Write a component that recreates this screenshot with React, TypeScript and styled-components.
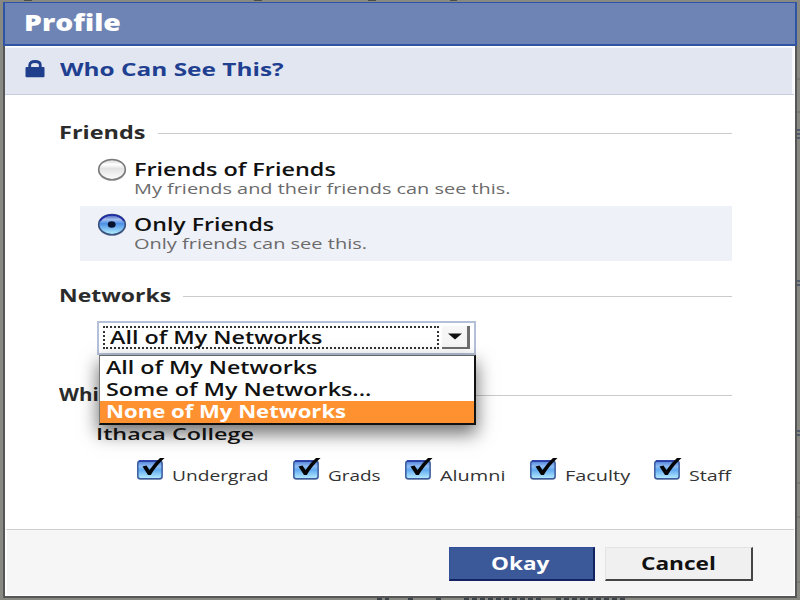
import React, { useLayoutEffect, useRef, useState } from "react";
import styled, { createGlobalStyle, css } from "styled-components";

const GlobalStyle = createGlobalStyle`
  * { box-sizing: border-box; }
  html, body { margin: 0; width: 800px; height: 600px; overflow: hidden; }
  body { font-family: "Open Sans", "Noto Sans", sans-serif; color: #111; }
`;

const Backdrop = styled.main`
  position: relative;
  width: 800px;
  height: 600px;
  padding: 2px 3px;
  background: #898984;
  overflow: hidden;
`;

const PageTrace = styled.svg`
  position: absolute;
  inset: 0;
`;

const Dialog = styled.section`
  position: relative;
  display: flex;
  flex-direction: column;
  width: 794px;
  height: 596px;
`;

const TitleBar = styled.header`
  flex: none;
  height: 44px;
  padding: 0 0 2px 19px;
  display: flex;
  align-items: center;
  background: #6d84b4;
  border: 2px solid #2f54a3;
  border-top-width: 1px;
`;

const Frame = styled.div`
  flex: 1;
  display: flex;
  flex-direction: column;
  border: 2px solid #565656;
  border-top: 0;
  padding: 1px 1px 1px 0;
  background: #fff;
`;

const SubHeader = styled.div`
  flex: none;
  height: 48px;
  padding: 0 0 2px 20px;
  display: flex;
  align-items: center;
  background: #e2e6f0;
  border-bottom: 1px solid #c6cadf;
  box-shadow: inset -2px 1px 0 #f6f7fc;
`;

const LockBox = styled.svg`
  display: block;
  width: 20px;
  height: 20px;
  margin-right: 15px;
`;

const Body = styled.div`
  flex: 1;
  min-height: 0;
  padding: 27px 62px 0 54px;
`;

const SectionHead = styled.div<{ $gap?: number }>`
  display: flex;
  align-items: center;
  height: 22px;
  margin-top: ${(p) => p.$gap ?? 0}px;
  &::after {
    content: "";
    flex: 1;
    height: 1px;
    margin: 0 0 0 12px;
    background: #cbcbcb;
  }
`;

const Options = styled.div`
  padding-top: 7px;
`;

const Option = styled.label<{ $selected?: boolean }>`
  display: flex;
  height: 55px;
  margin-left: 21px;
  padding: 7px 0 0 17px;
  background: ${(p) => (p.$selected ? "#eff1f8" : "transparent")};
`;

const OptionText = styled.div`
  padding: 1px 0 0 7px;
`;

const RadioIcon = styled.svg`
  display: block;
  width: 30px;
  height: 24px;
`;

const Network = styled.div`
  position: relative;
  z-index: 3;
  padding: 18px 0 0 37px;
`;

const SelectWrap = styled.div`
  position: relative;
  width: 379px;
  height: 34px;
  margin: 14px 0 0 38px;
`;

const SelectBox = styled.div`
  display: flex;
  height: 34px;
  padding: 3px 4px 4px 4px;
  border: 2px solid #b4c0d8;
  background: #fff;
`;

const SelectValue = styled.div`
  width: 336px;
  padding-left: 5px;
  display: flex;
  align-items: center;
  border: 2px dotted #333;
`;

const SelectArrow = styled.div`
  flex: 1;
  margin-left: 3px;
  display: flex;
  align-items: center;
  justify-content: center;
  background: #f6f6f6;
  border: solid #6e6e6e;
  border-width: 0 3px 2px 0;
`;

const Menu = styled.div`
  position: absolute;
  z-index: 2;
  top: 34px;
  left: 2px;
  width: 377px;
  height: 70px;
  padding-top: 1px;
  background: #fff;
  border: solid #111;
  border-width: 1px 2px 2px 1px;
  border-left-color: #777;
  border-top-color: #666;
  box-shadow: 0 8px 17px 1px rgba(0, 0, 0, 0.55);
`;

const MenuItem = styled.div<{ $active?: boolean }>`
  height: 22px;
  padding: 0 0 1px 6px;
  display: flex;
  align-items: center;
  ${(p) =>
    p.$active &&
    css`
      color: #fff;
      background: #ff9130;
    `}
`;

const Checks = styled.div`
  display: flex;
  padding: 13px 0 0 78px;
`;

const Check = styled.label<{ $width: number }>`
  display: flex;
  width: ${(p) => p.$width}px;
  flex: none;
`;

const CheckIcon = styled.svg`
  display: block;
  flex: none;
  width: 30px;
  height: 26px;
  margin-right: 5px;
`;

const CheckText = styled.div`
  padding-top: 9px;
`;

const Footer = styled.footer`
  flex: none;
  height: 66px;
  padding: 17px 41px 0 0;
  display: flex;
  justify-content: flex-end;
  gap: 10px;
  background: #f6f6f6;
  border-top: 1px solid #cfcfcf;
  border-left: 2px solid #fff;
`;

const Button = styled.button<{ $primary?: boolean }>`
  width: ${(p) => (p.$primary ? 146 : 148)}px;
  height: 34px;
  padding: 0 0 0 ${(p) => (p.$primary ? 41 : 35)}px;
  display: flex;
  align-items: center;
  text-align: left;
  font-family: inherit;
  border-radius: 0;
  color: ${(p) => (p.$primary ? "#fff" : "#111")};
  background: ${(p) => (p.$primary ? "#3b5998" : "#f0f0f0")};
  border-style: solid;
  border-width: 1px 2px 2px 1px;
  border-color: ${(p) => (p.$primary ? "#31509a #122263 #122263 #31509a" : "#e4e4e4 #444 #444 #e4e4e4")};
`;

const TextBox = styled.span<{ $width: number; $size: number; $weight: number; $color?: string }>`
  display: block;
  flex: none;
  width: ${(p) => p.$width}px;
  height: ${(p) => Math.round(p.$size * 1.2)}px;
  line-height: ${(p) => Math.round(p.$size * 1.2)}px;
  font-size: ${(p) => p.$size}px;
  font-weight: ${(p) => p.$weight};
  color: ${(p) => p.$color ?? "inherit"};
`;

const Glyphs = styled.span`
  display: inline-block;
  white-space: nowrap;
  transform-origin: 0 50%;
`;

type WideTextProps = { width: number; size?: number; weight?: number; color?: string; children: string };

/** Text set in an extended face: stretched to fill the given width. */
function WideText({ width, size = 17.5, weight = 600, color, children }: WideTextProps) {
  const ref = useRef<HTMLSpanElement>(null);
  const [scale, setScale] = useState(1);
  useLayoutEffect(() => {
    if (ref.current) setScale(width / ref.current.offsetWidth);
  }, [width, children]);
  return (
    <TextBox $width={width} $size={size} $weight={weight} $color={color}>
      <Glyphs ref={ref} style={{ transform: `scaleX(${scale})` }}>
        {children}
      </Glyphs>
    </TextBox>
  );
}

function Lock() {
  return (
    <LockBox viewBox="0 0 20 20">
      <path d="M4.700 8V5.200Q4.700 1.500 10 1.500Q15.300 1.500 15.300 5.200V8" fill="none" stroke="#1f3f8d" strokeWidth="2.800" />
      <rect x="0.500" y="7" width="19" height="10.300" rx="1" fill="#1f3f8d" />
    </LockBox>
  );
}

function Radio({ checked }: { checked?: boolean }) {
  const id = checked ? "radio-on" : "radio-off";
  return (
    <RadioIcon viewBox="0 0 30 24">
      <defs>
        <linearGradient id={id} x1="0" y1="0" x2="0" y2="1">
          <stop offset="0" stopColor={checked ? "#3552b4" : "#d2d2d2"} />
          <stop offset="0.25" stopColor={checked ? "#a5c0ee" : "#ffffff"} />
          <stop offset="0.45" stopColor={checked ? "#4b8fe6" : "#e2e2e2"} />
          <stop offset="1" stopColor={checked ? "#b9f4ff" : "#ffffff"} />
        </linearGradient>
      </defs>
      <ellipse cx="15" cy="12.500" rx="14" ry="10.600" fill="#000" opacity="0.15" />
      <ellipse cx="15" cy="11.600" rx="13.300" ry="10.100" fill={`url(#${id})`} stroke={checked ? "#39507f" : "#7a7a7a"} strokeWidth="1.600" />
      {checked && <path d="M3 8Q7 2 15 2T27 8" fill="none" stroke="#1f2aa5" strokeWidth="1.600" />}
      {checked && <ellipse cx="14.700" cy="11.500" rx="3.900" ry="3.200" fill="#07122e" />}
    </RadioIcon>
  );
}

function CheckMark() {
  return (
    <CheckIcon viewBox="0 0 30 26">
      <defs>
        <linearGradient id="check-fill" x1="0" y1="0" x2="0" y2="1">
          <stop offset="0" stopColor="#4f7fd8" />
          <stop offset="0.300" stopColor="#8fbdf3" />
          <stop offset="0.500" stopColor="#62aaf0" />
          <stop offset="1" stopColor="#b8efff" />
        </linearGradient>
      </defs>
      <rect x="0.500" y="4.500" width="25" height="18.500" rx="3" fill="#000" opacity="0.250" />
      <rect x="0.800" y="4" width="24.300" height="17.800" rx="2.500" fill="url(#check-fill)" stroke="#3a5c9f" strokeWidth="1.500" />
      <path d="M2 4H24" stroke="#2439a6" strokeWidth="1.600" />
      <path d="M5.500 9.500L9.500 8.500L12.500 13Q17.500 5.500 23 1H27.500Q19 9 13.800 18H11Z" fill="#050505" />
    </CheckIcon>
  );
}

const groups = [
  { name: "Undergrad", text: 97, cell: 156 },
  { name: "Grads", text: 53, cell: 112 },
  { name: "Alumni", text: 65, cell: 125 },
  { name: "Faculty", text: 65, cell: 124 },
  { name: "Staff", text: 42, cell: 78 },
];

export default function App() {
  return (
    <>
      <GlobalStyle />
      <Backdrop>
        <PageTrace viewBox="0 0 800 600" width="800" height="600">
          <path d="M24 0H32M254 0H262M368 0H376M450 0H457" stroke="#4c4c48" strokeWidth="2" />
          <path d="M797 130H800M797 134H800M797 138H800M797 281H800M797 285H800M797 431H800M797 435H800" stroke="#3f4d68" strokeWidth="1.500" />
          <path d="M797 79H800M797 112H800M797 483H800M797 517H800M797 582H800" stroke="#6d6d69" />
          <path d="M377 599H389M408 599H416M436 599H442M464 599H542M556 599H625" stroke="#3c4349" strokeWidth="3" strokeDasharray="5 3" />
        </PageTrace>
        <Dialog>
          <TitleBar>
            <WideText width={97} size={22.5} weight={800} color="#fff">Profile</WideText>
          </TitleBar>
          <Frame>
            <SubHeader>
              <Lock />
              <WideText width={223} weight={700} color="#213f91">Who Can See This?</WideText>
            </SubHeader>
            <Body>
              <SectionHead>
                <WideText width={87} size={17} weight={700} color="#2b2b2b">Friends</WideText>
              </SectionHead>
              <Options>
                <Option>
                  <Radio />
                  <OptionText>
                    <WideText width={202}>Friends of Friends</WideText>
                    <WideText width={376} size={14.5} weight={400} color="#6b6b6b">My friends and their friends can see this.</WideText>
                  </OptionText>
                </Option>
                <Option $selected>
                  <Radio checked />
                  <OptionText>
                    <WideText width={140}>Only Friends</WideText>
                    <WideText width={233} size={14.5} weight={400} color="#6b6b6b">Only friends can see this.</WideText>
                  </OptionText>
                </Option>
              </Options>
              <SectionHead $gap={24}>
                <WideText width={112} size={17} weight={700} color="#2b2b2b">Networks</WideText>
              </SectionHead>
              <SelectWrap>
                <SelectBox>
                  <SelectValue>
                    <WideText width={212}>All of My Networks</WideText>
                  </SelectValue>
                  <SelectArrow>
                    <svg width="14" height="7" viewBox="0 0 14 7">
                      <path d="M0 0.500H14L7 6.500Z" fill="#111" />
                    </svg>
                  </SelectArrow>
                </SelectBox>
                <Menu>
                  <MenuItem><WideText width={211}>All of My Networks</WideText></MenuItem>
                  <MenuItem><WideText width={265}>Some of My Networks...</WideText></MenuItem>
                  <MenuItem $active><WideText width={240} weight={700}>None of My Networks</WideText></MenuItem>
                </Menu>
              </SelectWrap>
              <SectionHead $gap={29}>
                <WideText width={40} size={17} weight={700} color="#2b2b2b">Whi</WideText>
              </SectionHead>
              <Network>
                <WideText width={158} size={17}>Ithaca College</WideText>
              </Network>
              <Checks>
                {groups.map((g) => (
                  <Check key={g.name} $width={g.cell}>
                    <CheckMark />
                    <CheckText>
                      <WideText width={g.text} size={15} weight={500} color="#333">{g.name}</WideText>
                    </CheckText>
                  </Check>
                ))}
              </Checks>
            </Body>
            <Footer>
              <Button $primary><WideText width={58} weight={700}>Okay</WideText></Button>
              <Button><WideText width={75} weight={700}>Cancel</WideText></Button>
            </Footer>
          </Frame>
        </Dialog>
      </Backdrop>
    </>
  );
}
